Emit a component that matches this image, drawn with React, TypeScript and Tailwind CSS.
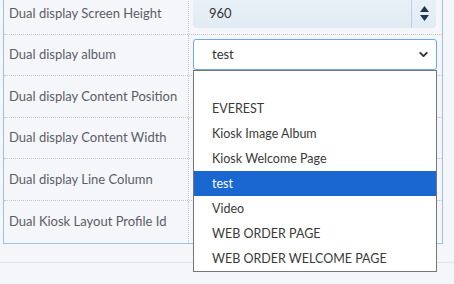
import { ChevronDown } from "lucide-react";

const font = { fontFamily: "Lato, 'Open Sans', sans-serif" };

const rows = [
  "Dual display Screen Height",
  "Dual display album",
  "Dual display Content Position",
  "Dual display Content Width",
  "Dual display Line Column",
  "Dual Kiosk Layout Profile Id",
];

const options = [
  "",
  "EVEREST",
  "Kiosk Image Album",
  "Kiosk Welcome Page",
  "test",
  "Video",
  "WEB ORDER PAGE",
  "WEB ORDER WELCOME PAGE",
];

function NumberInput() {
  return (
    <div className="flex h-[30px] w-[243px] rounded-[4px] bg-gradient-to-b from-[#e9f1f8] to-[#e1ebf3] text-[13px] text-[#333]">
      <div className="flex flex-1 items-center pl-4">960</div>
      <div className="flex w-[25px] flex-col items-center justify-center gap-[3px] border-l border-[#b9cfe2]">
        <svg width="9" height="6" viewBox="0 0 9 6">
          <path d="M4.5 0L9 6H0z" fill="#1f3652" />
        </svg>
        <svg width="9" height="6" viewBox="0 0 9 6">
          <path d="M0 0h9L4.5 6z" fill="#1f3652" />
        </svg>
      </div>
    </div>
  );
}

function AlbumSelect() {
  return (
    <div className="relative w-[244px]">
      <div className="flex h-[31px] items-center justify-between rounded-[3px] border border-[#6ea9e6] bg-white pl-[18px] pr-[6px] text-[13px] text-[#333]">
        <span>test</span>
        <ChevronDown size={13} strokeWidth={3.5} className="text-[#333]" />
      </div>
      <ul className="absolute left-0 top-[31px] z-10 w-[244px] border border-[#767676] bg-white text-[12.5px] text-[#3a3a3a]">
        {options.map((o, i) => (
          <li
            key={i}
            className={
              "flex h-[25px] items-center pl-[18px] " +
              (o === "test" ? "bg-[#1a67d2] text-white" : "")
            }
          >
            {o}
          </li>
        ))}
      </ul>
    </div>
  );
}

export default function App() {
  return (
    <div style={font} className="h-[284px] w-[454px] overflow-hidden bg-[#f5f6fa]">
      <div className="-mt-[8px] ml-[3px] w-[440px] border border-[#9dbfe8] bg-[#f5f6fa]">
        {rows.map((label, i) => (
          <div
            key={label}
            className={
              "flex h-[41.6px] " +
              (i < rows.length - 1 ? "border-b border-dotted border-[#c4c6cb]" : "")
            }
          >
            <div className="flex w-[185px] items-center border-r border-dotted border-[#c4c6cb] pl-[5px] text-[13px] text-[#5a5d66]">
              {label}
            </div>
            <div className="flex flex-1 items-center pl-[4px]">
              {i === 0 && <NumberInput />}
              {i === 1 && <AlbumSelect />}
            </div>
          </div>
        ))}
      </div>
      <div className="mt-[18px] border-t border-[#dfe1e6]" />
    </div>
  );
}
